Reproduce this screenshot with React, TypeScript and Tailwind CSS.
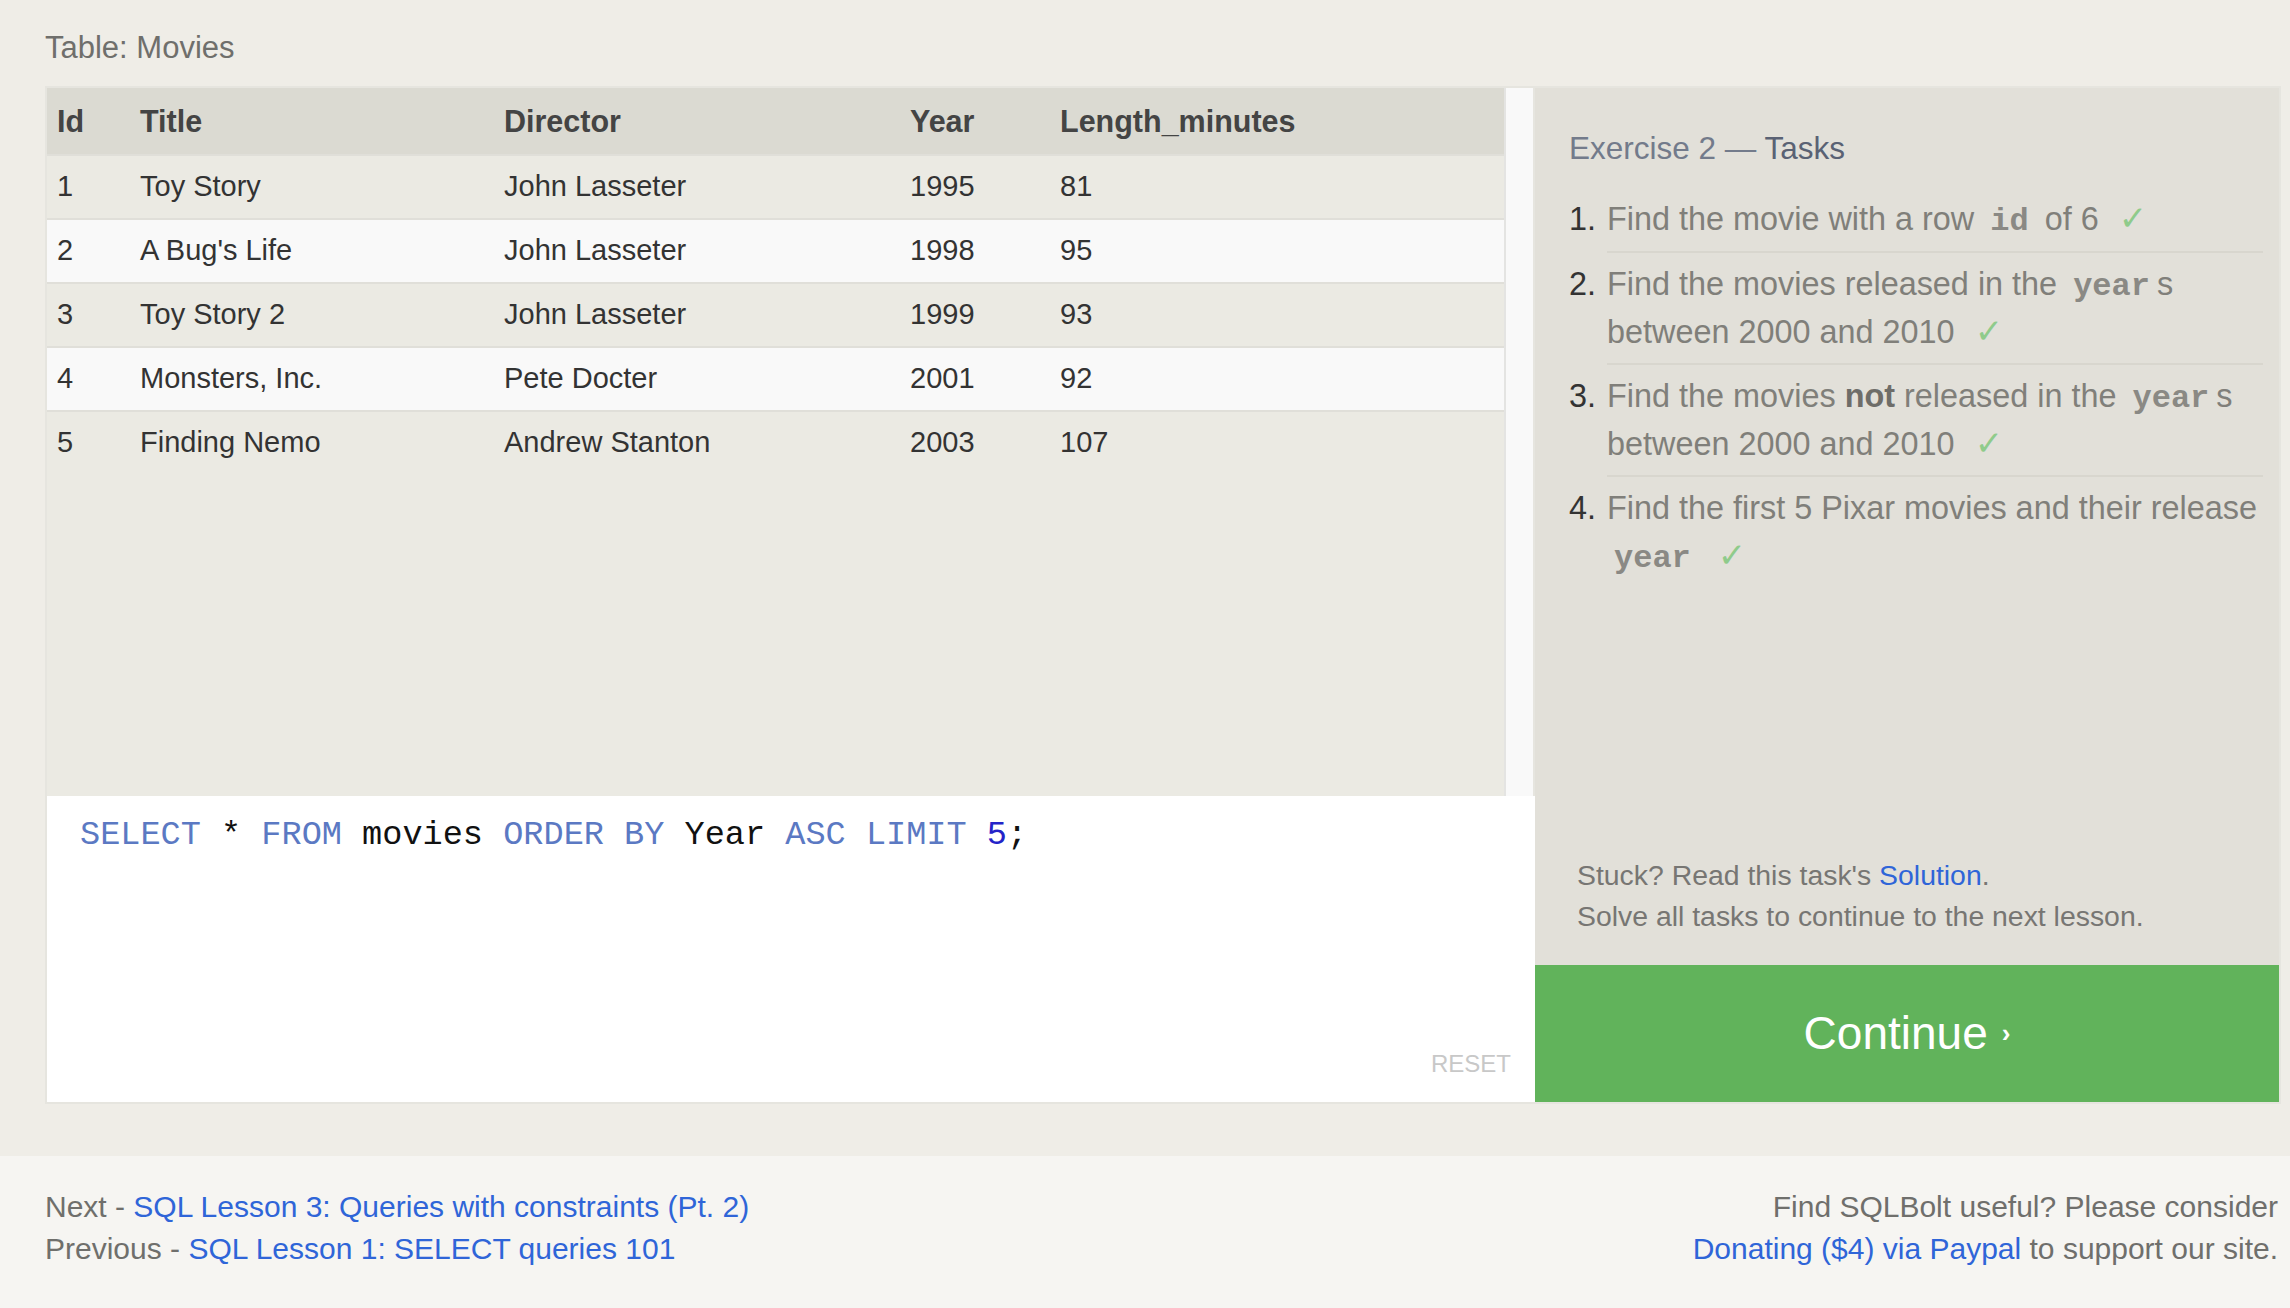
const rows = [
  { id: 1, title: "Toy Story", director: "John Lasseter", year: 1995, len: 81 },
  { id: 2, title: "A Bug's Life", director: "John Lasseter", year: 1998, len: 95 },
  { id: 3, title: "Toy Story 2", director: "John Lasseter", year: 1999, len: 93 },
  { id: 4, title: "Monsters, Inc.", director: "Pete Docter", year: 2001, len: 92 },
  { id: 5, title: "Finding Nemo", director: "Andrew Stanton", year: 2003, len: 107 },
];

const cols = "grid grid-cols-[83px_364px_406px_150px_1fr] items-center pl-[10px]";

function Code({ children }: { children: string }) {
  return (
    <code className="font-['Liberation_Mono',monospace] font-bold text-[32px] leading-none text-[#8a8984] px-[7px]">
      {children}
    </code>
  );
}

function Check() {
  return (
    <span className="font-['DejaVu_Sans',sans-serif] text-[34px] leading-none text-[#8fcb8b] ml-[20px]">✓</span>
  );
}

export default function App() {
  return (
    <div className="min-h-screen bg-[#efede7] font-['Liberation_Sans',Arial,sans-serif] flex flex-col">
      <div className="pl-[45px] pr-[9px] pt-[28px] pb-[52px]">
        <div className="text-[31px] leading-[40px] text-[#6f6f6c]">Table: Movies</div>

        <div className="mt-[18px] flex border-2 border-[#e6e5df]">
          {/* left: table + editor */}
          <div className="flex flex-col w-[1488px] shrink-0">
            <div className="flex h-[708px] bg-[#ebeae3]">
              <div className="flex-1">
                <div className={`${cols} h-[66px] bg-[#dbdad2] text-[30.5px] font-bold text-[#444] pt-[2px]`}>
                  <div>Id</div>
                  <div>Title</div>
                  <div>Director</div>
                  <div>Year</div>
                  <div>Length_minutes</div>
                </div>
                {rows.map((r, i) => (
                  <div
                    key={r.id}
                    className={`${cols} h-[64px] border-t-2 border-[#e0dfd9] text-[29px] text-[#333] ${i % 2 === 1 ? "bg-[#f9f9f9]" : "bg-[#ebeae3]"}`}
                  >
                    <div>{r.id}</div>
                    <div>{r.title}</div>
                    <div>{r.director}</div>
                    <div>{r.year}</div>
                    <div>{r.len}</div>
                  </div>
                ))}
              </div>
              <div className="w-[29px] bg-[#f9f9f9] border-l-2 border-[#e4e4e2]" />
              <div className="w-[2px] bg-[#e6e5df]" />
            </div>

            <div className="relative h-[306px] bg-white pt-[19px] pl-[33px]">
              <div className="font-['Liberation_Mono',monospace] text-[33.6px] leading-[40px] text-[#111] whitespace-pre">
                <span className="text-[#5b79c3]">SELECT</span> * <span className="text-[#5b79c3]">FROM</span> movies{" "}
                <span className="text-[#5b79c3]">ORDER BY</span> Year <span className="text-[#5b79c3]">ASC</span>{" "}
                <span className="text-[#5b79c3]">LIMIT</span> <span className="text-[#2323c8]">5</span>;
              </div>
              <div className="absolute right-[24px] bottom-[20px] text-[24px] text-[#c8c8c8]">RESET</div>
            </div>
          </div>

          {/* right: tasks + continue */}
          <div className="flex-1 flex flex-col">
            <div className="flex-1 bg-[#e2e0d9] pl-[34px] pr-[16px] pt-[42px] flex flex-col">
              <div className="text-[31.5px] leading-[36px] text-[#737b8b]">
                Exercise 2 — <span className="text-[#5a6274]">Tasks</span>
              </div>
              <ol className="mt-[20px] text-[32.4px] leading-[48px] text-[#807f7a]">
                <li className="flex">
                  <span className="w-[38px] shrink-0 pt-[9px] text-[#333]">1.</span>
                  <div className="flex-1 pt-[9px] pb-[8px] border-b-2 border-[#d8d6ce]">
                    Find the movie with a row <Code>id</Code> of 6<Check />
                  </div>
                </li>
                <li className="flex">
                  <span className="w-[38px] shrink-0 pt-[7px] text-[#333]">2.</span>
                  <div className="flex-1 py-[7px] border-b-2 border-[#d8d6ce]">
                    <div>
                      Find the movies released in the <Code>year</Code>s
                    </div>
                    <div>
                      between 2000 and 2010<Check />
                    </div>
                  </div>
                </li>
                <li className="flex">
                  <span className="w-[38px] shrink-0 pt-[7px] text-[#333]">3.</span>
                  <div className="flex-1 py-[7px] border-b-2 border-[#d8d6ce]">
                    <div>
                      Find the movies <b className="text-[#6e6d69]">not</b> released in the <Code>year</Code>s
                    </div>
                    <div>
                      between 2000 and 2010<Check />
                    </div>
                  </div>
                </li>
                <li className="flex">
                  <span className="w-[38px] shrink-0 pt-[7px] text-[#333]">4.</span>
                  <div className="flex-1 py-[7px] whitespace-nowrap">
                    <div>Find the first 5 Pixar movies and their release</div>
                    <div>
                      <Code>year</Code>
                      <Check />
                    </div>
                  </div>
                </li>
              </ol>
              <div className="mt-auto pb-[28px] pl-[8px] text-[28.4px] leading-[41px] text-[#777673]">
                <div>
                  Stuck? Read this task's <span className="text-[#2f65d8]">Solution</span>.
                </div>
                <div>Solve all tasks to continue to the next lesson.</div>
              </div>
            </div>
            <div className="h-[137px] bg-[#61b35b] flex items-center justify-center text-white">
              <span className="text-[46px]">Continue</span>
              <span className="text-[26px] ml-[14px] font-bold">›</span>
            </div>
          </div>
        </div>
      </div>

      <div className="flex-1 bg-[#f6f5f2] flex justify-between pl-[45px] pr-[12px] pt-[30px] text-[30px] leading-[42px] text-[#6f6f6c]">
        <div>
          <div>
            Next - <span className="text-[#2f65d8]">SQL Lesson 3: Queries with constraints (Pt. 2)</span>
          </div>
          <div>
            Previous - <span className="text-[#2f65d8]">SQL Lesson 1: SELECT queries 101</span>
          </div>
        </div>
        <div className="text-right">
          <div>Find SQLBolt useful? Please consider</div>
          <div>
            <span className="text-[#2f65d8]">Donating ($4) via Paypal</span> to support our site.
          </div>
        </div>
      </div>
    </div>
  );
}
